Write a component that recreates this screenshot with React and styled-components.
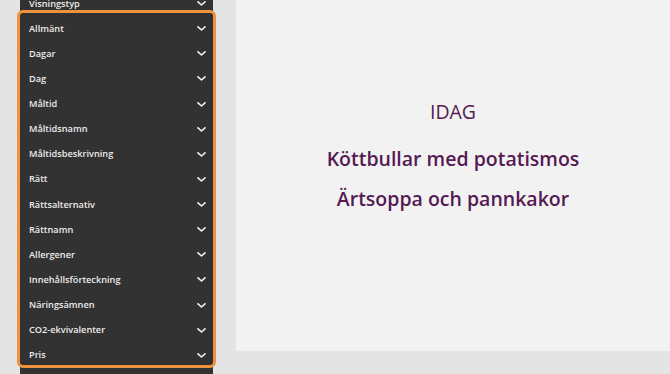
import React from "react";
import styled, { createGlobalStyle } from "styled-components";

const GlobalStyle = createGlobalStyle`
  html, body {
    margin: 0;
    padding: 0;
    background: #e4e4e4;
    font-family: "Open Sans", "Noto Sans", sans-serif;
  }
`;

const Page = styled.div`
  display: flex;
  width: 670px;
  height: 374px;
  overflow: hidden;
`;

const Sidebar = styled.aside`
  flex: 0 0 236px;
  box-sizing: border-box;
  padding: 0 23px 0 20px;
  overflow: hidden;
`;

const List = styled.div`
  margin-top: -12px;
  background: #323232;
`;

const Group = styled.div`
  outline: 3px solid #ee9340;
  border-radius: 3px;
  position: relative;
  z-index: 1;
`;

const Row = styled.div`
  box-sizing: border-box;
  height: 25.14px;
  padding: 9.5px 7px 0 9px;
  display: flex;
  justify-content: space-between;
  align-items: flex-start;

  & .label {
    font-size: 9.2px;
    font-weight: 600;
    line-height: 12px;
    color: #ececec;
    white-space: nowrap;
  }

  & .chevron {
    height: 12px;
    display: flex;
    align-items: center;
  }
`;

const Main = styled.main`
  flex: 1;
  height: 351px;
  background: #f2f2f2;
  display: flex;
  flex-direction: column;
  align-items: center;
  box-sizing: border-box;
  padding-top: 98px;
  color: #551a54;
`;

const Heading = styled.div`
  font-size: 19.5px;
  line-height: 27px;
  font-weight: 400;
  margin-bottom: 19.5px;
`;

const Dish = styled.div`
  font-size: 19.5px;
  line-height: 27px;
  font-weight: 600;
  margin-bottom: 13px;
`;

const Chevron = () => (
  <svg width="9" height="5" viewBox="0 0 9 5">
    <polyline points="1,0.8 4.5,4 8,0.8" fill="none" stroke="#f2f2f2" strokeWidth="1.6" strokeLinecap="round" strokeLinejoin="round" />
  </svg>
);

const SettingRow = ({ label }) => (
  <Row>
    <span className="label">{label}</span>
    {label && (
      <span className="chevron">
        <Chevron />
      </span>
    )}
  </Row>
);

const groupItems = [
  "Allmänt",
  "Dagar",
  "Dag",
  "Måltid",
  "Måltidsnamn",
  "Måltidsbeskrivning",
  "Rätt",
  "Rättsalternativ",
  "Rättnamn",
  "Allergener",
  "Innehållsförteckning",
  "Näringsämnen",
  "CO2-ekvivalenter",
  "Pris",
];

const App = () => {
  return (
    <Page>
      <GlobalStyle />
      <Sidebar>
        <List>
          <SettingRow label="Visningstyp" />
          <Group>
            {groupItems.map((item) => (
              <SettingRow key={item} label={item} />
            ))}
          </Group>
          <SettingRow label="" />
        </List>
      </Sidebar>
      <Main>
        <Heading>IDAG</Heading>
        <Dish>Köttbullar med potatismos</Dish>
        <Dish>Ärtsoppa och pannkakor</Dish>
      </Main>
    </Page>
  );
};

export default App;
